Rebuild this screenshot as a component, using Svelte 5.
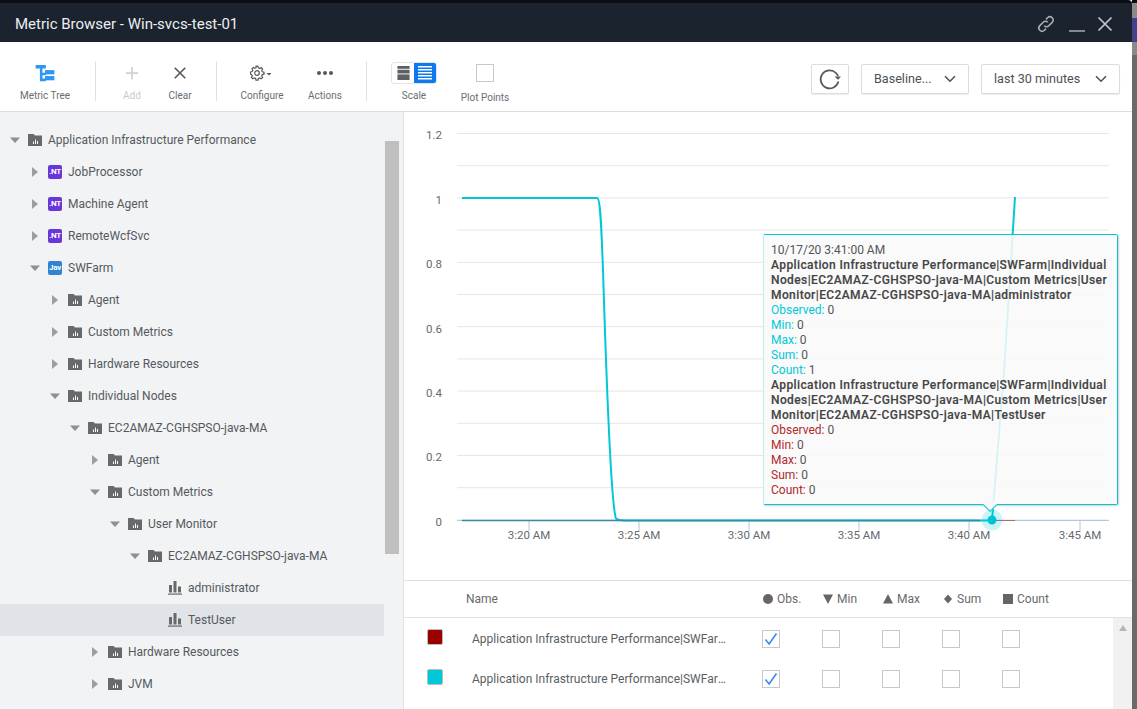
<script lang="ts">
  type Row = { label: string; depth: number; kind: 'folder' | 'net' | 'java' | 'leaf'; open?: boolean; selected?: boolean }

  const rows: Row[] = [
    { label: 'Application Infrastructure Performance', depth: 0, kind: 'folder', open: true },
    { label: 'JobProcessor', depth: 1, kind: 'net' },
    { label: 'Machine Agent', depth: 1, kind: 'net' },
    { label: 'RemoteWcfSvc', depth: 1, kind: 'net' },
    { label: 'SWFarm', depth: 1, kind: 'java', open: true },
    { label: 'Agent', depth: 2, kind: 'folder' },
    { label: 'Custom Metrics', depth: 2, kind: 'folder' },
    { label: 'Hardware Resources', depth: 2, kind: 'folder' },
    { label: 'Individual Nodes', depth: 2, kind: 'folder', open: true },
    { label: 'EC2AMAZ-CGHSPSO-java-MA', depth: 3, kind: 'folder', open: true },
    { label: 'Agent', depth: 4, kind: 'folder' },
    { label: 'Custom Metrics', depth: 4, kind: 'folder', open: true },
    { label: 'User Monitor', depth: 5, kind: 'folder', open: true },
    { label: 'EC2AMAZ-CGHSPSO-java-MA', depth: 6, kind: 'folder', open: true },
    { label: 'administrator', depth: 7, kind: 'leaf' },
    { label: 'TestUser', depth: 7, kind: 'leaf', selected: true },
    { label: 'Hardware Resources', depth: 4, kind: 'folder' },
    { label: 'JVM', depth: 4, kind: 'folder' }
  ]

  const gridLines = Array.from({ length: 13 }, (_, i) => 133.5 + i * 32.2)
  const yLabels = [
    { t: '1.2', y: 139 },
    { t: '1', y: 204 },
    { t: '0.8', y: 268 },
    { t: '0.6', y: 333 },
    { t: '0.4', y: 397 },
    { t: '0.2', y: 461 },
    { t: '0', y: 526 }
  ]
  const xLabels = [
    { t: '3:20 AM', x: 529 },
    { t: '3:25 AM', x: 639 },
    { t: '3:30 AM', x: 749 },
    { t: '3:35 AM', x: 859 },
    { t: '3:40 AM', x: 969 },
    { t: '3:45 AM', x: 1080 }
  ]

  const tips = [
    { cls: 'cyan', name: 'administrator', count: 1 },
    { cls: 'red', name: 'TestUser', count: 0 }
  ]

  const series = ['#9b0000', '#00c8d9']
  const cols = ['Obs.', 'Min', 'Max', 'Sum', 'Count']
</script>

<div class="page">
  <div class="window">
    <header class="titlebar">
      <span class="title">Metric Browser - Win-svcs-test-01</span>
      <div class="win-actions">
        <svg width="20" height="20" viewBox="0 0 20 20" fill="none" stroke="#a9adb2" stroke-width="1.6">
          <path d="M8.2 11.8a3.2 3.2 0 0 0 4.6 0l3.4-3.4a3.2 3.2 0 0 0-4.6-4.6L10 5.4" />
          <path d="M11.8 8.2a3.2 3.2 0 0 0-4.6 0l-3.4 3.4a3.2 3.2 0 0 0 4.6 4.6l1.6-1.6" />
        </svg>
        <span class="minimize"></span>
        <svg width="16" height="16" viewBox="0 0 16 16" stroke="#c4c7ca" stroke-width="1.7">
          <path d="M1.5 1.5l13 13M14.5 1.5l-13 13" />
        </svg>
      </div>
    </header>

    <div class="toolbar">
      <div class="tool tree-tool">
        <svg width="20" height="17" viewBox="0 0 22 20" fill="#2e96f3">
          <path d="M0 0h12v4H8v5h4v3H8v4h4v3H5V4H0z" />
          <rect x="11" y="6" width="11" height="5" />
          <rect x="11" y="13" width="11" height="5" />
        </svg>
        <span>Metric Tree</span>
      </div>
      <i class="sep"></i>
      <div class="tool add disabled">
        <svg width="14" height="14" viewBox="0 0 16 16" stroke="#cfd1d3" stroke-width="2"><path d="M8 1v14M1 8h14" /></svg>
        <span>Add</span>
      </div>
      <div class="tool clear">
        <svg width="14" height="14" viewBox="0 0 16 16" stroke="#55595d" stroke-width="1.9"><path d="M2 2l12 12M14 2L2 14" /></svg>
        <span>Clear</span>
      </div>
      <i class="sep s2"></i>
      <div class="tool configure">
        <svg width="24" height="16" viewBox="0 0 24 16" fill="none" stroke="#55595d">
          <path stroke-width="1.2" d="M6 1.2h2l.4 1.7 1.3.6 1.5-.9 1.4 1.4-.9 1.5.6 1.3 1.7.4v2l-1.7.4-.6 1.3.9 1.5-1.4 1.4-1.5-.9-1.3.6-.4 1.7H6l-.4-1.7-1.3-.6-1.5.9-1.4-1.4.9-1.5-.6-1.3L.5 9V7l1.7-.4.6-1.3-.9-1.5 1.4-1.4 1.5.9 1.3-.6z" />
          <circle cx="7" cy="8" r="2.3" stroke-width="1.2" />
          <path d="M16.5 8h5l-2.5 2.6z" fill="#55595d" stroke="none" />
        </svg>
        <span>Configure</span>
      </div>
      <div class="tool actions">
        <svg width="18" height="16" viewBox="0 0 18 16" fill="#55595d">
          <circle cx="3" cy="8" r="2" /><circle cx="9" cy="8" r="2" /><circle cx="15" cy="8" r="2" />
        </svg>
        <span>Actions</span>
      </div>
      <i class="sep s3"></i>
      <div class="tool scale">
        <div class="toggle">
          <span class="half">
            <svg width="13" height="15" viewBox="0 0 13 15" fill="#5d6166"><rect y="0" width="13" height="3" /><rect y="4" width="13" height="4" /><rect y="9" width="13" height="6" /></svg>
          </span>
          <span class="half on">
            <svg width="14" height="14" viewBox="0 0 14 14" fill="#fff"><rect y="0" width="14" height="1.5" /><rect y="3" width="14" height="1.5" /><rect y="6" width="14" height="1.5" /><rect y="9" width="14" height="1.5" /><rect y="12" width="14" height="1.5" /></svg>
          </span>
        </div>
        <span>Scale</span>
      </div>
      <div class="tool plot">
        <i class="plot-box"></i>
        <span>Plot Points</span>
      </div>

      <div class="controls">
        <button class="refresh" aria-label="Refresh">
          <svg width="24" height="24" viewBox="0 0 24 24" fill="none" stroke="#55595d" stroke-width="1.7">
            <path d="M20.4 14.5A9 9 0 1 1 18 6l2.2 3" />
            <path d="M23 9.6h-6.4l3.4 3.2z" fill="#55595d" stroke="none" />
          </svg>
        </button>
        <button class="select baseline">
          <span>Baseline...</span>
          <svg width="12" height="8" viewBox="0 0 12 8" fill="none" stroke="#4d5156" stroke-width="1.6"><path d="M1 1.2l5 5 5-5" /></svg>
        </button>
        <button class="select range">
          <span>last 30 minutes</span>
          <svg width="12" height="8" viewBox="0 0 12 8" fill="none" stroke="#4d5156" stroke-width="1.6"><path d="M1 1.2l5 5 5-5" /></svg>
        </button>
      </div>
    </div>

    <div class="body">
      <aside class="tree">
        <ul>
          {#each rows as row}
            <li class:selected={row.selected} style={`padding-left:${row.depth * 20 + 10}px`}>
              {#if row.kind === 'leaf'}
                <span class="arrow"></span>
              {:else if row.open}
                <span class="arrow"><svg width="10" height="10" viewBox="0 0 10 10" fill="#8c9094"><path d="M0 2.5h10L5 8z" /></svg></span>
              {:else}
                <span class="arrow"><svg width="10" height="10" viewBox="0 0 10 10" fill="#9a9ea2"><path d="M2 0l6 5-6 5z" /></svg></span>
              {/if}

              {#if row.kind === 'folder'}
                <svg class="icon" width="14" height="12" viewBox="0 0 14 12">
                  <path d="M0 0h5.5l1.5 1.6h7V12H0z" fill="#68696b" />
                  <path d="M5 7.5h1V10H5zM7 5.5h1V10H7zM9 7h1v3H9z" fill="#fff" />
                </svg>
              {:else if row.kind === 'leaf'}
                <svg class="icon" width="14" height="14" viewBox="0 0 14 14" fill="#68696b">
                  <rect x="1" y="4" width="3" height="7.5" /><rect x="5.5" y="0" width="3" height="11.5" /><rect x="10" y="5.5" width="3" height="6" /><rect y="12.5" width="14" height="1.2" />
                </svg>
              {:else}
                <span class="badge {row.kind}">{row.kind === 'net' ? '.NT' : 'Jav'}</span>
              {/if}
              <span class="label">{row.label}</span>
            </li>
          {/each}
        </ul>
        <div class="scroll"><i></i></div>
      </aside>

      <section class="main">
        <div class="chart">
          <svg class="plot-svg" width="728" height="468" viewBox="404 112 728 468">
            {#each gridLines as y}
              <line x1="457" x2="1109" y1={y} y2={y} stroke="#e6e6e6" />
            {/each}
            {#each yLabels as l}
              <text x="442" y={l.y} text-anchor="end" class="axis">{l.t}</text>
            {/each}
            <line x1="457" x2="1109" y1="520.5" y2="520.5" stroke="#b4c8dc" />
            {#each xLabels as l}
              <line x1={l.x} x2={l.x} y1="521" y2="531" stroke="#b4c8dc" />
              <text x={l.x} y="539" text-anchor="middle" class="axis">{l.t}</text>
            {/each}
            <path d="M462 520.5H1015" fill="none" stroke="#b06a6a" stroke-width="1" />
            <path d="M462 198H597C600 198 601 215 603 270C607 400 611 505 616 518.5C618 520 620 520.5 624 520.5H992L1004 372L1015 197"
              fill="none" stroke="#00c8d9" stroke-width="2" />
            <path d="M462 520.5H980" fill="none" stroke="#3b88a8" stroke-width="1.4" />
            <circle cx="992" cy="520" r="10.5" fill="#00c8d9" opacity=".2" />
            <circle cx="992" cy="520" r="4.5" fill="#00c4d6" />
          </svg>

          <div class="tooltip">
            <div>10/17/20 3:41:00 AM</div>
            {#each tips as tip}
              <div class="metric">Application Infrastructure Performance|SWFarm|Individual Nodes|EC2AMAZ-CGHSPSO-java-MA|Custom Metrics|User Monitor|EC2AMAZ-CGHSPSO-java-MA|{tip.name}</div>
              <div><b class={tip.cls}>Observed:</b> 0</div>
              <div><b class={tip.cls}>Min:</b> 0</div>
              <div><b class={tip.cls}>Max:</b> 0</div>
              <div><b class={tip.cls}>Sum:</b> 0</div>
              <div><b class={tip.cls}>Count:</b> {tip.count}</div>
            {/each}
            <i class="tip-arrow"></i>
          </div>
        </div>

        <div class="table">
          <div class="thead grid">
            <span></span>
            <span>Name</span>
            {#each cols as c, i}
              <span class="col">
                <svg width="10" height="10" viewBox="0 0 10 10" fill="#666">
                  {#if i === 0}<circle cx="5" cy="5" r="5" />
                  {:else if i === 1}<path d="M0 .5h10L5 10z" />
                  {:else if i === 2}<path d="M5 0l5 9.5H0z" />
                  {:else if i === 3}<path d="M5 .5L9 5l-4 4.5L1 5z" />
                  {:else}<rect width="10" height="10" />{/if}
                </svg>
                {c}
              </span>
            {/each}
          </div>
          <div class="tbody">
            <div class="rows">
              {#each series as color}
                <div class="grid row">
                  <i class="swatch" style={`background:${color}`}></i>
                  <span class="name">Application Infrastructure Performance|SWFarm|Individual Nodes</span>
                  {#each cols as c, i}
                    <span class="check">
                      {#if i === 0}
                        <svg width="16" height="16" viewBox="0 0 16 16" fill="none" stroke="#3b86f0" stroke-width="1.6"><path d="M2.5 8.5l3.6 4.5 7.4-10.5" /></svg>
                      {/if}
                    </span>
                  {/each}
                </div>
              {/each}
            </div>
            <div class="vscroll"><svg width="8" height="6" viewBox="0 0 8 6" fill="#b5b5b5"><path d="M4 0l4 6H0z" /></svg></div>
          </div>
        </div>
      </section>
    </div>
  </div>
  <div class="backdrop">
    <i class="b1"></i><i class="b2"></i><i class="b3"></i><i class="b4"></i>
  </div>
</div>

<style>
  :global(body) {
    margin: 0;
  }

  .page {
    display: flex;
    width: 1137px;
    height: 709px;
    overflow: hidden;
    font-family: Roboto, 'Liberation Sans', sans-serif;
    font-size: 12px;
    color: #55595d;
    background: #6a6a6a;
  }

  .window {
    width: 1132px;
    height: 709px;
    display: flex;
    flex-direction: column;
    background: #fff;
    flex: none;
  }

  .backdrop {
    flex: 1;
    display: flex;
    flex-direction: column;
  }
  .backdrop i { display: block; }
  .b1 { height: 3px; background: #0b0f13; }
  .b2 { height: 15px; background: #8a8a8a; }
  .b3 { height: 24px; background: #45408a; }
  .b4 { height: 13px; background: #8a8a8a; }

  .titlebar {
    height: 39px;
    flex: none;
    box-sizing: content-box;
    border-top: 3px solid #0b0f13;
    background: #1a232e;
    display: flex;
    align-items: center;
    justify-content: space-between;
    padding: 0 19px 0 15px;
    border-radius: 0 4px 0 0;
  }

  .title {
    font-size: 15px;
    padding-top: 3px;
    color: #eceef0;
  }

  .win-actions {
    display: flex;
    align-items: center;
    gap: 12px;
    padding-top: 2px;
  }

  .minimize {
    width: 16px;
    height: 2px;
    background: #85898e;
    margin-top: 14px;
    margin-left: 1px;
  }

  .toolbar {
    height: 69px;
    flex: none;
    display: flex;
    align-items: flex-start;
    border-bottom: 1px solid #dcdee0;
    box-sizing: content-box;
  }

  .tool {
    display: flex;
    flex-direction: column;
    align-items: center;
    font-size: 10px;
    color: #6a6e72;
    padding-top: 23px;
    height: 46px;
    justify-content: flex-start;
    flex: none;
  }
  .tool svg { height: 14px; margin: 1px 0 9px; display: block; }
  .tool > span { line-height: 14px; }

  .tree-tool { width: 90px; }
  .tree-tool svg { height: 17px; margin: 0 0 7px; }
  .add { width: 48px; margin-left: 12px; }
  .clear { width: 48px; }
  .configure { width: 64px; margin-left: 13px; }
  .configure svg, .actions svg { height: 16px; margin: 0 0 8px; }
  .actions { width: 62px; }
  .disabled { color: #c8cacc; }

  .sep {
    width: 1px;
    height: 40px;
    margin: 19px 0 0 5px;
    background: #e0e1e3;
    flex: none;
  }
  .s2 { margin-left: 12px; }
  .s3 { margin-left: 10px; }

  .scale { width: 60px; margin-left: 17px; padding-top: 20px; height: 49px; }
  .toggle {
    display: flex;
    width: 46px;
    height: 22px;
    border-radius: 3px;
    border: 1px solid #e2e4e6;
    box-sizing: border-box;
    overflow: hidden;
    margin-bottom: 5px;
  }
  .half { flex: 1; display: flex; align-items: center; justify-content: center; }
  .half svg { margin: 0; }
  .half.on { background: #0f78ef; }

  .plot { width: 70px; margin-left: 6px; padding-top: 22px; height: 47px; }
  .plot-box {
    display: block;
    width: 18px;
    height: 18px;
    box-sizing: border-box;
    border: 1px solid #c6c8ca;
    margin-bottom: 9px;
  }

  .controls {
    margin-left: auto;
    margin-right: 12px;
    margin-top: 22px;
    display: flex;
    gap: 12px;
  }

  button {
    font: inherit;
    height: 30px;
    background: #fff;
    border: 1px solid #dadcde;
    border-radius: 2px;
    box-shadow: 0 1px 1px rgba(0, 0, 0, 0.08);
    box-sizing: border-box;
    display: flex;
    align-items: center;
    color: #4d5156;
    padding: 0;
  }
  .refresh { width: 38px; justify-content: center; }
  .select { justify-content: space-between; font-size: 12.6px; padding: 0 12px 1px; }
  .baseline { width: 108px; }
  .range { width: 139px; }

  .body {
    flex: 1;
    display: flex;
    min-height: 0;
  }

  .tree {
    width: 403px;
    flex: none;
    background: #f1f3f5;
    border-right: 1px solid #e0e2e4;
    display: flex;
    overflow: hidden;
  }

  ul {
    list-style: none;
    margin: 0;
    padding: 12px 0 0;
    width: 384px;
    flex: none;
  }

  li {
    height: 32px;
    display: flex;
    align-items: center;
    box-sizing: border-box;
    font-size: 12px;
    color: #55595d;
  }
  li.selected { background: #e0e3e7; }

  .arrow {
    width: 10px;
    height: 10px;
    margin-right: 8px;
    flex: none;
    display: block;
  }
  .arrow svg { display: block; }

  .icon { flex: none; width: 14px; margin-right: 6px; }

  .badge {
    width: 14px;
    height: 14px;
    margin-right: 6px;
    flex: none;
    border-radius: 2px;
    color: #fff;
    font-size: 8px;
    letter-spacing: -0.3px;
    font-weight: 700;
    line-height: 14px;
    text-align: center;
    overflow: hidden;
  }
  .badge.net { background: #6a35d9; }
  .badge.java { background: #2f85d2; }

  .scroll { margin: 29px 0 0 1px; width: 14px; }
  .scroll i { display: block; height: 413px; background: #bfbfbf; }

  .main {
    flex: 1;
    display: flex;
    flex-direction: column;
    min-width: 0;
  }

  .chart {
    height: 468px;
    flex: none;
    position: relative;
    border-bottom: 1px solid #dfdfdf;
    box-sizing: content-box;
  }

  .plot-svg { display: block; }
  .axis { font-size: 11.5px; fill: #666a6e; font-family: Roboto, 'Liberation Sans', sans-serif; }

  .tooltip {
    position: absolute;
    left: 359px;
    top: 122px;
    width: 355px;
    height: 271px;
    box-sizing: border-box;
    padding: 8px 7px 0;
    line-height: 15px;
    font-size: 12px;
    color: #555;
    background: rgba(249, 249, 249, 0.87);
    border: 1px solid #00c8d9;
    border-left-color: #bfeef2;
    border-radius: 2px;
    box-shadow: 1px 1px 2px rgba(0, 0, 0, 0.2);
  }
  .metric { font-weight: 500; color: #444; letter-spacing: 0.4px; -webkit-text-stroke: 0.15px #444; }
  .tooltip b { font-weight: 400; }
  .cyan { color: #00c8d9; }
  .red { color: #b02a2a; }

  .tip-arrow {
    position: absolute;
    left: 221px;
    bottom: -6px;
    width: 9px;
    height: 9px;
    background: #f9f9f9;
    border-right: 1px solid #00c8d9;
    border-bottom: 1px solid #00c8d9;
    transform: rotate(45deg);
  }

  .table { flex: 1; min-height: 0; display: flex; flex-direction: column; }

  .grid {
    display: grid;
    grid-template-columns: 62px 296px repeat(5, 60px);
    align-items: center;
  }

  .thead {
    height: 36px;
    flex: none;
    border-bottom: 1px solid #e2e2e2;
    color: #6a6a6a;
    font-size: 12px;
  }
  .col { display: flex; align-items: center; gap: 4px; padding-left: 1px; }

  .tbody { flex: 1; display: flex; min-height: 0; }
  .rows { width: 709px; flex: none; padding-top: 1px; }
  .row { height: 40px; }

  .swatch {
    display: block;
    width: 16px;
    height: 16px;
    margin-left: 23px;
    margin-top: -4px;
    border: 1px solid #bbb;
    border-radius: 2px;
    box-sizing: border-box;
  }

  .name {
    padding-left: 6px;
    width: 254px;
    margin-top: -1px;
    white-space: nowrap;
    overflow: hidden;
    text-overflow: ellipsis;
    font-size: 12px;
    color: #5a5e62;
  }

  .check {
    width: 18px;
    height: 18px;
    box-sizing: border-box;
    border: 1px solid #c6c8ca;
    display: block;
  }
  .check svg { display: block; }

  .vscroll {
    flex: 1;
    background: #f1f1f1;
    display: flex;
    justify-content: center;
    padding-top: 7px;
    align-items: flex-start;
  }
  .vscroll svg { display: block; }
</style>
